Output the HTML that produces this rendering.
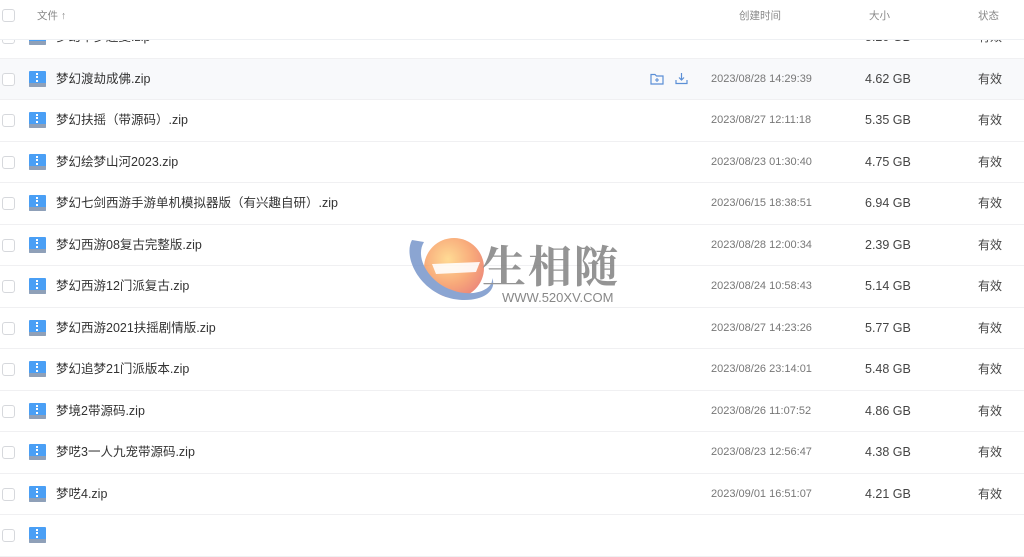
<!DOCTYPE html>
<html><head><meta charset="utf-8"><style>
*{margin:0;padding:0;box-sizing:border-box}
body{width:1024px;height:536px;overflow:hidden;background:#fff;font-family:"Liberation Sans","Noto Sans CJK SC",sans-serif;position:relative}
.row{position:absolute;left:0;width:1024px;height:41.5px;border-bottom:1px solid #f0f0f2}
.row .cb{position:absolute;left:2px;top:14px;width:13px;height:13px;border:1px solid #d6d8dc;border-radius:3px;background:#fff}
.row .ic{position:absolute;left:29px;top:12px;width:17px;height:16px;background:#4a9ff5;border-radius:1px;overflow:hidden}
.row .ic:after{content:"";position:absolute;left:0;bottom:0;width:17px;height:4px;background:#8fa0b8}
.row .ic:before{content:"";position:absolute;left:7px;top:2px;width:2px;height:9px;border-left:2px dotted #fff}
.row .n,.row .d,.row .s,.row .st{position:absolute;top:0;line-height:40px;height:40px}
.row .n{left:56px;font-size:12.5px;color:#333}
.row .d{left:711px;font-size:11px;color:#777}
.row .s{left:865px;font-size:12.5px;color:#444}
.row .st{left:978px;font-size:12px;color:#444}
.hdr{position:absolute;left:0;top:0;width:1024px;height:40px;background:#fff;border-bottom:1px solid #eef0f3;z-index:2;font-size:10.5px;color:#888}
.hdr span{position:absolute;top:0;line-height:32px}
.wm{position:absolute;left:402px;top:228px;z-index:3;opacity:.8}
</style></head><body>
<div class="hdr">
<div style="position:absolute;left:2px;top:9px;width:13px;height:13px;border:1px solid #d6d8dc;border-radius:3px"></div>
<span style="left:37px">文件 ↑</span>
<span style="left:739px">创建时间</span>
<span style="left:869px">大小</span>
<span style="left:978px">状态</span>
</div>
<div class="row" style="top:17px"><div class="cb"></div><div class="ic"></div><div class="n">梦幻千梦趣复.zip</div><div class="d">2023/08/24 10:25:27</div><div class="s">5.20 GB</div><div class="st">有效</div></div>
<div class="row" style="top:58.5px;background:#f8f9fb"><div class="cb"></div><div class="ic"></div><div class="n">梦幻渡劫成佛.zip</div>
<svg style="position:absolute;left:650px;top:14px" width="14" height="12" viewBox="0 0 14 12"><path d="M1 1.5h4l1.5 1.5H13v8H1z" fill="none" stroke="#5b8fd6" stroke-width="1.2"/><path d="M7 5v4M5 7h4" stroke="#5b8fd6" stroke-width="1.1"/></svg>
<svg style="position:absolute;left:675px;top:13px" width="13" height="13" viewBox="0 0 13 13"><path d="M6.5 1v7M4 5.5l2.5 2.5 2.5-2.5M1 8v3.5h11V8" fill="none" stroke="#5b8fd6" stroke-width="1.2"/></svg>
<div class="d">2023/08/28 14:29:39</div><div class="s">4.62 GB</div><div class="st">有效</div></div>
<div class="row" style="top:100px"><div class="cb"></div><div class="ic"></div><div class="n">梦幻扶摇（带源码）.zip</div><div class="d">2023/08/27 12:11:18</div><div class="s">5.35 GB</div><div class="st">有效</div></div>
<div class="row" style="top:141.5px"><div class="cb"></div><div class="ic"></div><div class="n">梦幻绘梦山河2023.zip</div><div class="d">2023/08/23 01:30:40</div><div class="s">4.75 GB</div><div class="st">有效</div></div>
<div class="row" style="top:183px"><div class="cb"></div><div class="ic"></div><div class="n">梦幻七剑西游手游单机模拟器版（有兴趣自研）.zip</div><div class="d">2023/06/15 18:38:51</div><div class="s">6.94 GB</div><div class="st">有效</div></div>
<div class="row" style="top:224.5px"><div class="cb"></div><div class="ic"></div><div class="n">梦幻西游08复古完整版.zip</div><div class="d">2023/08/28 12:00:34</div><div class="s">2.39 GB</div><div class="st">有效</div></div>
<div class="row" style="top:266px"><div class="cb"></div><div class="ic"></div><div class="n">梦幻西游12门派复古.zip</div><div class="d">2023/08/24 10:58:43</div><div class="s">5.14 GB</div><div class="st">有效</div></div>
<div class="row" style="top:307.5px"><div class="cb"></div><div class="ic"></div><div class="n">梦幻西游2021扶摇剧情版.zip</div><div class="d">2023/08/27 14:23:26</div><div class="s">5.77 GB</div><div class="st">有效</div></div>
<div class="row" style="top:349px"><div class="cb"></div><div class="ic"></div><div class="n">梦幻追梦21门派版本.zip</div><div class="d">2023/08/26 23:14:01</div><div class="s">5.48 GB</div><div class="st">有效</div></div>
<div class="row" style="top:390.5px"><div class="cb"></div><div class="ic"></div><div class="n">梦境2带源码.zip</div><div class="d">2023/08/26 11:07:52</div><div class="s">4.86 GB</div><div class="st">有效</div></div>
<div class="row" style="top:432px"><div class="cb"></div><div class="ic"></div><div class="n">梦呓3一人九宠带源码.zip</div><div class="d">2023/08/23 12:56:47</div><div class="s">4.38 GB</div><div class="st">有效</div></div>
<div class="row" style="top:473.5px"><div class="cb"></div><div class="ic"></div><div class="n">梦呓4.zip</div><div class="d">2023/09/01 16:51:07</div><div class="s">4.21 GB</div><div class="st">有效</div></div>
<div class="row" style="top:515px"><div class="cb"></div><div class="ic"></div></div>
<div class="wm">
<svg width="230" height="80" viewBox="0 0 230 80">
<defs><radialGradient id="g" cx="40%" cy="35%" r="70%"><stop offset="0" stop-color="#ffd27a"/><stop offset=".6" stop-color="#f7955a"/><stop offset="1" stop-color="#e86a5a"/></radialGradient></defs>
<circle cx="52" cy="40" r="30" fill="url(#g)"/>
<path d="M10 12 C0 30 20 70 60 72 C85 73 95 60 90 50 C92 62 70 70 50 62 C28 55 12 30 22 14 Z" fill="#6f8fc8"/>
<path d="M30 36 L78 34 L74 44 L34 46 Z" fill="#fff" opacity=".9"/>
<text x="80" y="54" font-family="'Noto Serif CJK SC',serif" font-size="44" font-weight="bold" fill="#7a7a7a" letter-spacing="2">生相随</text>
<text x="100" y="74" font-family="'Liberation Sans',sans-serif" font-size="13" fill="#6a6a6a">WWW.520XV.COM</text>
</svg>
</div>
</body></html>
